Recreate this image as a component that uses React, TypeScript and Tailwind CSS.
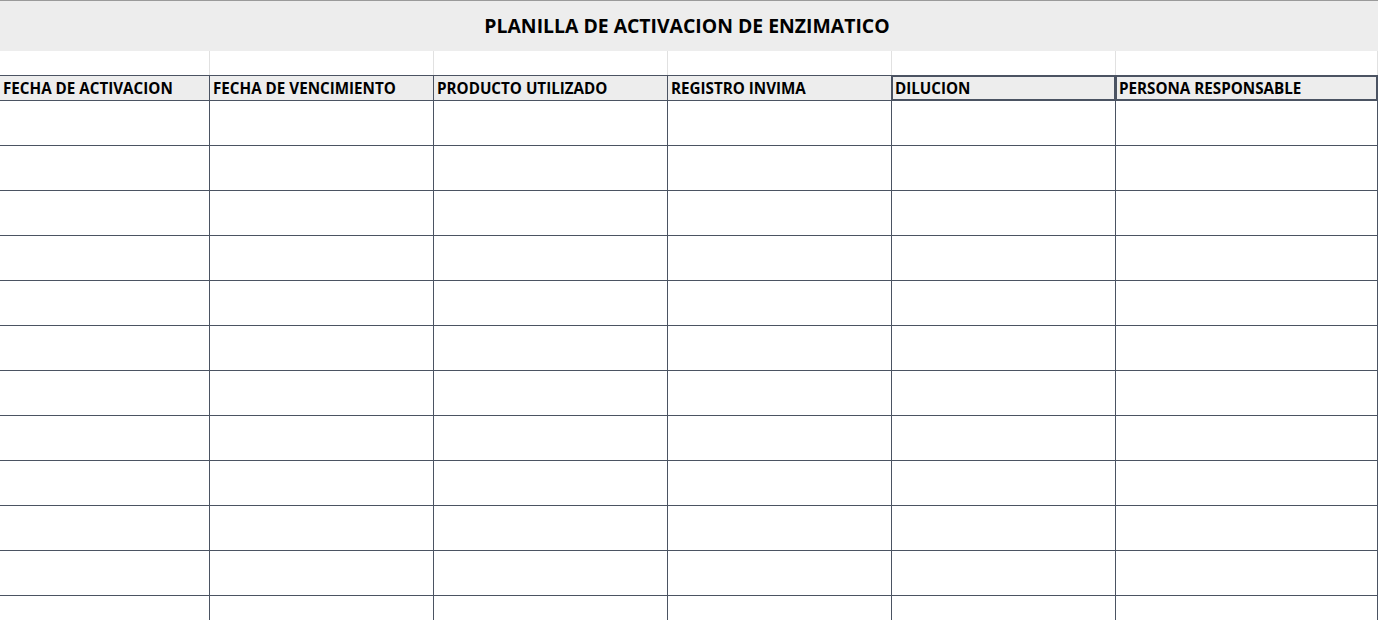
const columns = [
  { label: 'FECHA DE ACTIVACION', w: 'w-[210px]' },
  { label: 'FECHA DE VENCIMIENTO', w: 'w-[224px]' },
  { label: 'PRODUCTO UTILIZADO', w: 'w-[234px]' },
  { label: 'REGISTRO INVIMA', w: 'w-[224px]' },
  { label: 'DILUCION', w: 'w-[224px]', selected: true },
  { label: 'PERSONA RESPONSABLE', w: 'flex-1', selected: true },
]

export default function App() {
  return (
    <div className="w-[1378px] h-[620px] overflow-hidden bg-white text-black font-['Open_Sans',sans-serif]">
      {/* Title band */}
      <div className="h-[51px] border-t border-[#9a9a9a] bg-[#ededed] flex items-center justify-center">
        <h1 className="text-[19.4px] font-bold pr-[4px] pb-[1px]">PLANILLA DE ACTIVACION DE ENZIMATICO</h1>
      </div>

      {/* Empty spacer row */}
      <div className="flex h-[24px]">
        {columns.map((c, i) => (
          <div key={i} className={`${c.w} h-full border-r border-[#e1e1e1]`} />
        ))}
      </div>

      {/* Header row */}
      <div className="flex h-[26px] border-y border-[#4b5362] bg-[#ededed]">
        {columns.map((c, i) => (
          <div
            key={i}
            className={`${c.w} h-full border-r border-[#4b5362] flex items-center pl-[3px] pt-[1px] text-[15.2px] font-bold ${
              c.selected ? 'shadow-[inset_0_0_0_1px_#4b5362]' : ''
            }`}
          >
            {c.label}
          </div>
        ))}
      </div>

      {/* Data rows */}
      {Array.from({ length: 12 }).map((_, r) => (
        <div key={r} className="flex h-[45px] border-b border-[#4b5362]">
          {columns.map((c, i) => (
            <div key={i} className={`${c.w} h-full border-r border-[#4b5362]`} />
          ))}
        </div>
      ))}
    </div>
  )
}
